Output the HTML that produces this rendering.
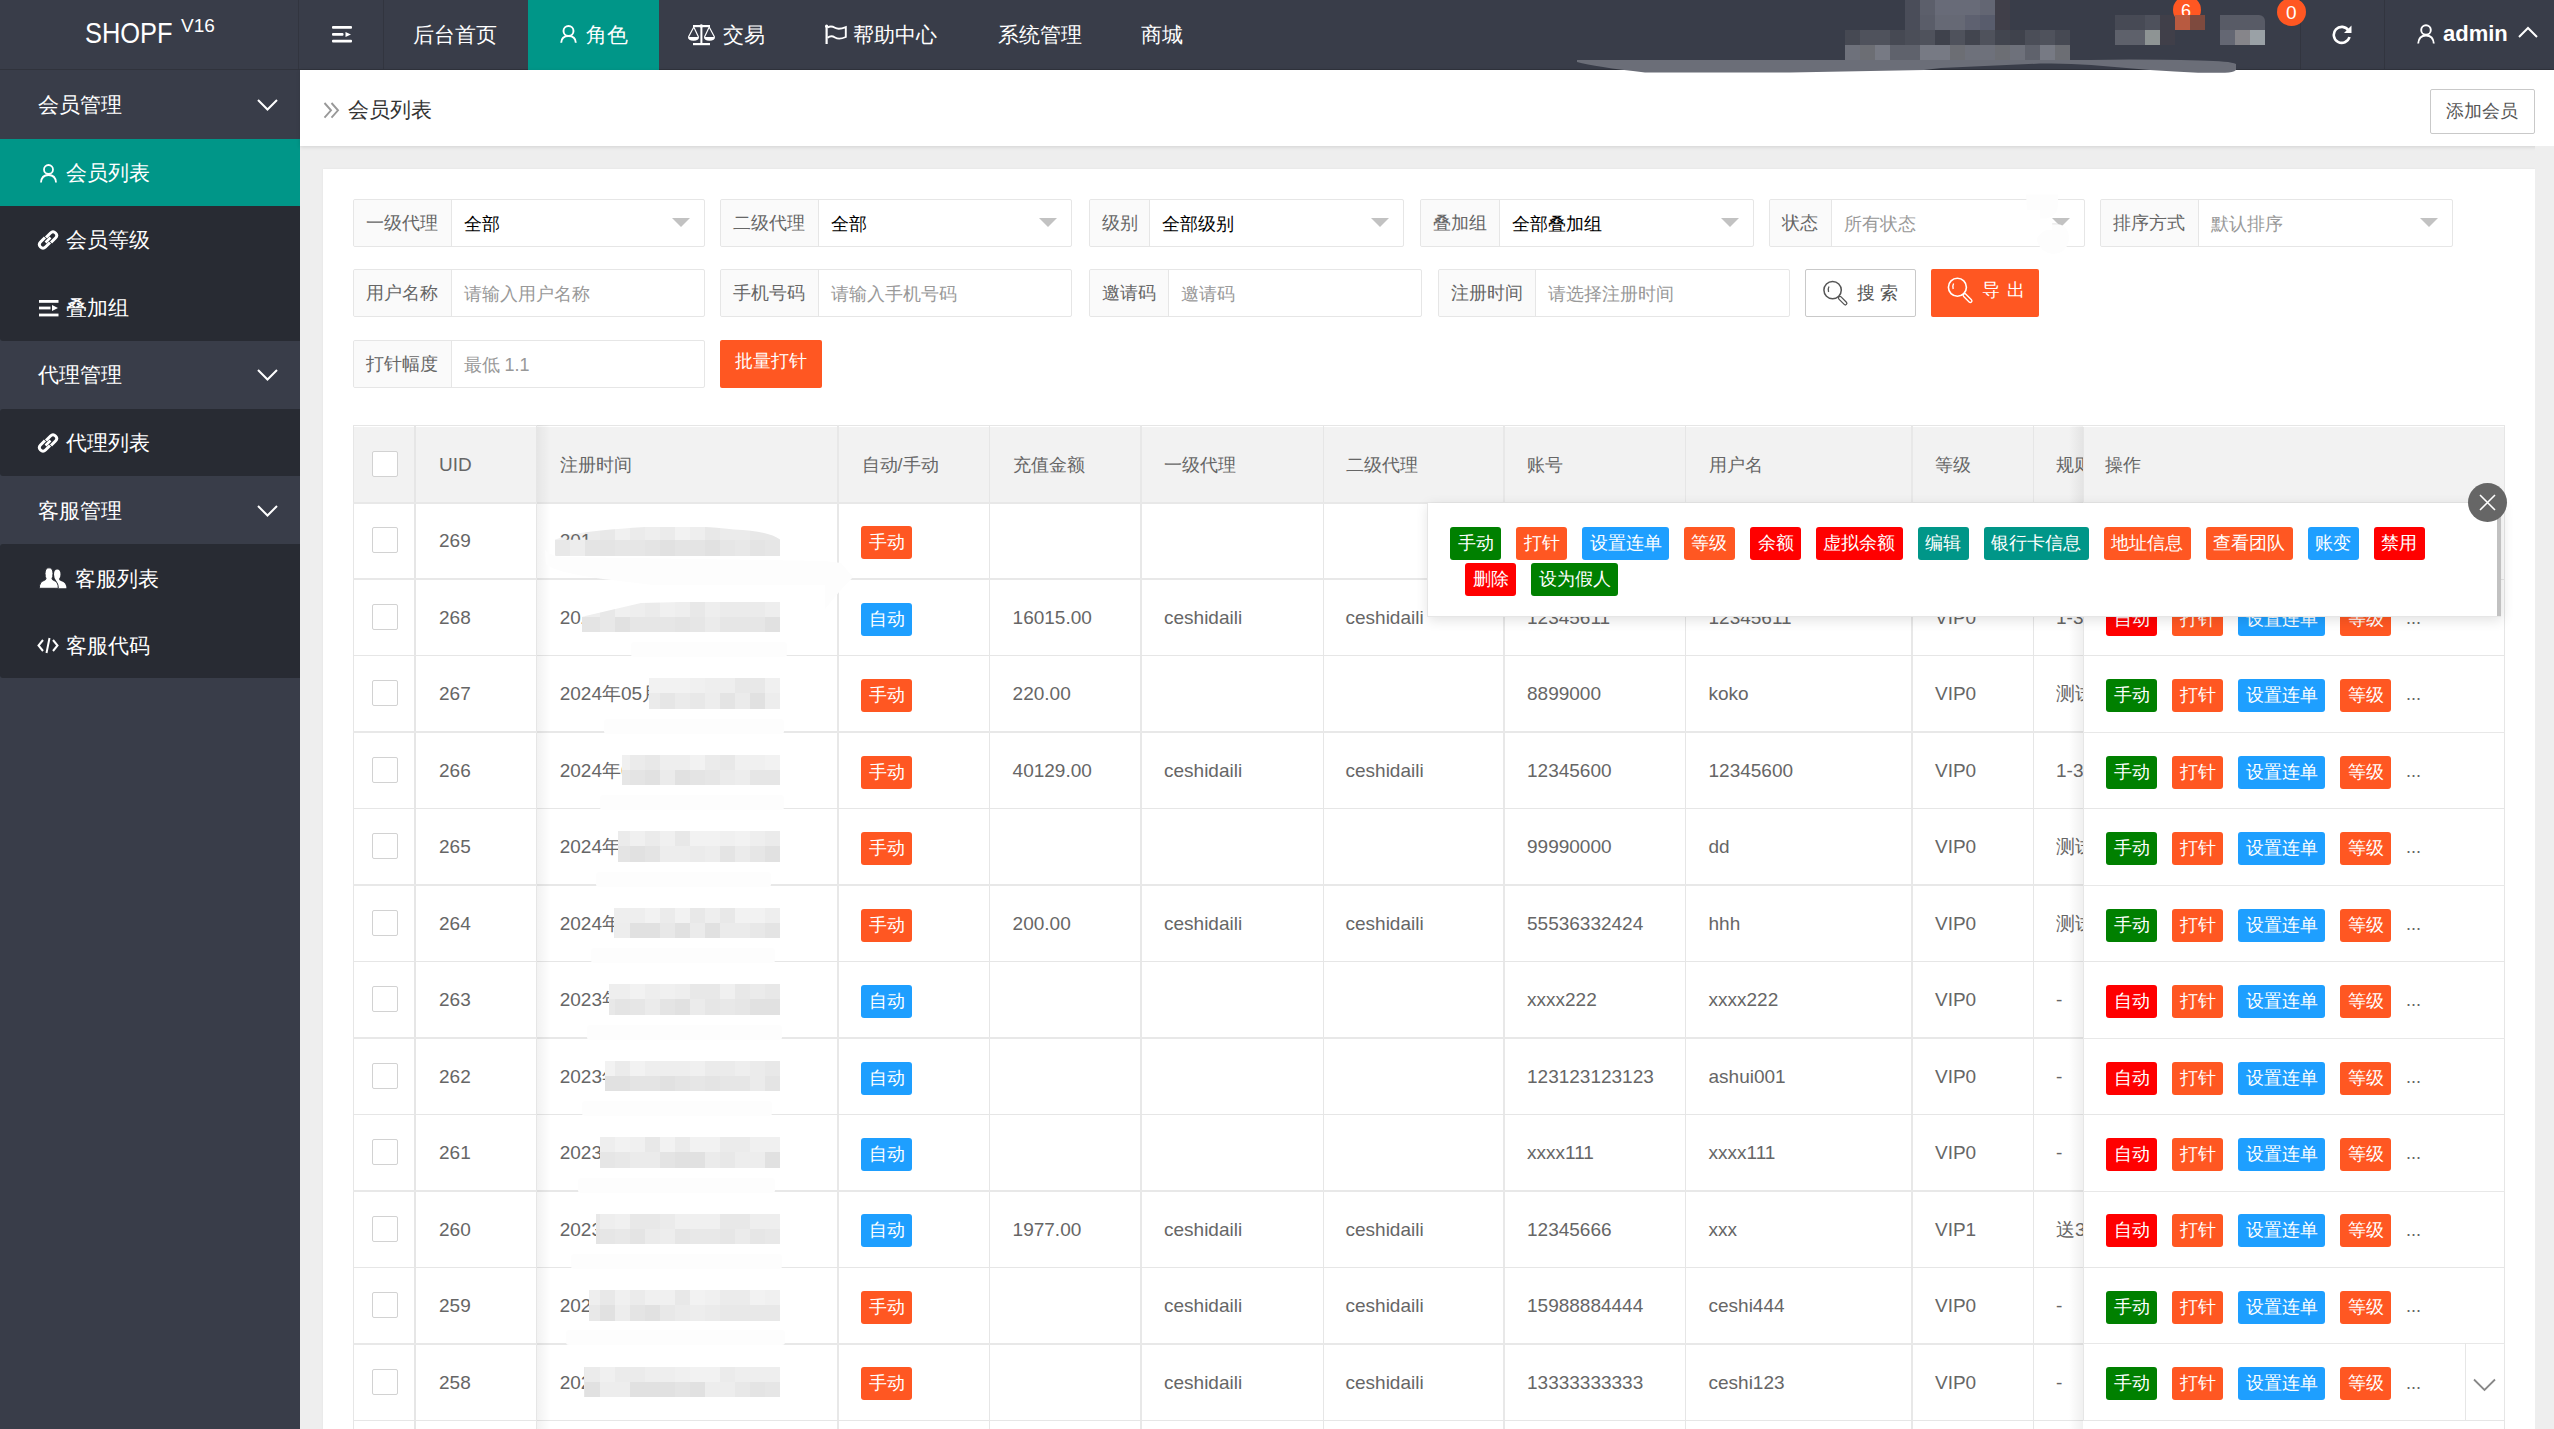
<!DOCTYPE html><html><head><meta charset="utf-8"><title>会员列表</title><style>
*{box-sizing:border-box;margin:0;padding:0}
html,body{width:2554px;height:1429px;overflow:hidden;background:#EEEEEE;font-family:"Liberation Sans",sans-serif;position:relative}
.ab{position:absolute}
.tx{position:absolute;white-space:nowrap;line-height:1}
.hdr{left:0;top:0;width:2554px;height:70px;background:#393D49}
.side{left:0;top:70px;width:300px;height:1359px;background:#393D49}
.w{color:#fff}
.tag{position:absolute;height:33px;line-height:33px;border-radius:3px;color:#fff;font-size:18px;text-align:center;white-space:nowrap}
.g{background:#008000}.o{background:#FF5722}.b{background:#1E9FFF}.r{background:#FF0000}.t{background:#009688}
.cb{position:absolute;width:26px;height:26px;border:1px solid #D2D2D2;border-radius:2px;background:#fff}
.fbox{position:absolute;height:47.5px;border:1px solid #E6E6E6;border-radius:2px;background:#fff}
.flab{position:absolute;left:0;top:0;height:100%;background:#FAFAFA;border-right:1px solid #E6E6E6;border-radius:2px 0 0 2px;color:#666;font-size:18px;line-height:47.5px;padding-left:12px;white-space:nowrap}
.fval{position:absolute;top:0;line-height:48.5px;font-size:18px;white-space:nowrap}
.tri{position:absolute;width:0;height:0;border-left:9px solid transparent;border-right:9px solid transparent;border-top:9px solid #C2C2C2}
.hl{position:absolute;height:1px;background:#E6E6E6}
.vl{position:absolute;width:1px;background:#E6E6E6}
.td{position:absolute;font-size:18px;color:#666;white-space:nowrap;line-height:20px}
.lt{font-size:19px}
</style></head><body>
<div class="ab hdr"></div>
<div class="ab" style="left:298px;top:0;width:1px;height:70px;background:#32353F"></div>
<div class="ab" style="left:383px;top:0;width:1px;height:70px;background:#32353F"></div>
<div class="ab" style="left:2300px;top:0;width:1px;height:70px;background:#32353F"></div>
<div class="ab" style="left:2384px;top:0;width:1px;height:70px;background:#32353F"></div>
<div class="ab" style="left:0;top:69px;width:2554px;height:1px;background:#30333C"></div>
<div class="tx w" style="left:85px;top:18px;font-size:29.5px;transform:scaleX(0.862);transform-origin:0 0">SHOPF</div>
<div class="tx w" style="left:181px;top:16px;font-size:19px">V16</div>
<svg class="ab" style="left:332px;top:26px" width="21" height="17" viewBox="0 0 21 17"><g fill="#fff"><rect x="0" y="0" width="20" height="2.8" rx="1"/><rect x="0" y="7" width="11.5" height="2.8" rx="1"/><path d="M13.5 6 L19 8.4 L13.5 11Z"/><rect x="0" y="13.8" width="20" height="2.8" rx="1"/></g></svg>
<div class="tx w" style="left:413px;top:24px;font-size:21px">后台首页</div>
<div class="ab" style="left:528px;top:0;width:131px;height:70px;background:#009688"></div>
<svg class="ab" style="left:560px;top:25px" width="17" height="18" viewBox="0 0 17 18"><circle cx="8.5" cy="6" r="5" fill="none" stroke="#fff" stroke-width="1.9"/><path d="M1.2 17.8 Q1.5 11 8.5 11 Q15.5 11 15.8 17.8" fill="none" stroke="#fff" stroke-width="1.9"/></svg>
<div class="tx w" style="left:586px;top:24px;font-size:21px">角色</div>
<svg class="ab" style="left:686px;top:22px" width="30" height="24" viewBox="0 0 30 24"><g fill="#fff"><rect x="7" y="3" width="17" height="2.2"/><circle cx="15.3" cy="4" r="1.8"/><rect x="14.4" y="4" width="2" height="18"/><rect x="7" y="21" width="17" height="2.2"/><path d="M2 15 H13 Q13 18.8 7.5 18.8 Q2 18.8 2 15Z"/><path d="M18 15 H29 Q29 18.8 23.5 18.8 Q18 18.8 18 15Z"/></g><g stroke="#fff" stroke-width="1.2" fill="none"><path d="M2.5 15 L7.8 5 L12.5 15"/><path d="M18.5 15 L23.2 5 L28.5 15"/></g></svg>
<div class="tx w" style="left:723px;top:24px;font-size:21px">交易</div>
<svg class="ab" style="left:824px;top:24px" width="24" height="22" viewBox="0 0 24 22"><circle cx="2.6" cy="2.2" r="1.6" fill="#fff"/><path d="M2.6 2 V20" stroke="#fff" stroke-width="2.2"/><path d="M3.6 3.5 Q7 1.5 11 3.8 Q14.5 6 21.8 3.2 V13 Q15 16 11 13.5 Q7 11 3.6 13.8" stroke="#fff" stroke-width="1.9" fill="none"/></svg>
<div class="tx w" style="left:853px;top:24px;font-size:21px">帮助中心</div>
<div class="tx w" style="left:998px;top:24px;font-size:21px">系统管理</div>
<div class="tx w" style="left:1141px;top:24px;font-size:21px">商城</div>
<div class="ab" style="left:1905px;top:0px;width:15px;height:15px;background:#4A4D59"></div>
<div class="ab" style="left:1920px;top:0px;width:15px;height:15px;background:#5C5F6B"></div>
<div class="ab" style="left:1935px;top:0px;width:45px;height:15px;background:#686B78"></div>
<div class="ab" style="left:1980px;top:0px;width:15px;height:15px;background:#636673"></div>
<div class="ab" style="left:1905px;top:15px;width:15px;height:15px;background:#4A4D59"></div>
<div class="ab" style="left:1920px;top:15px;width:15px;height:15px;background:#5A5D69"></div>
<div class="ab" style="left:1935px;top:15px;width:30px;height:15px;background:#666975"></div>
<div class="ab" style="left:1965px;top:15px;width:15px;height:15px;background:#5E6170"></div>
<div class="ab" style="left:1980px;top:15px;width:15px;height:15px;background:#585C6C"></div>
<div class="ab" style="left:1995px;top:0px;width:15px;height:30px;background:#403F49"></div>
<div class="ab" style="left:1845px;top:30px;width:15px;height:15px;background:#464953"></div>
<div class="ab" style="left:1860px;top:30px;width:15px;height:15px;background:#4F525C"></div>
<div class="ab" style="left:1875px;top:30px;width:15px;height:15px;background:#4F525C"></div>
<div class="ab" style="left:1890px;top:30px;width:15px;height:15px;background:#464953"></div>
<div class="ab" style="left:1905px;top:30px;width:15px;height:15px;background:#4B4E58"></div>
<div class="ab" style="left:1920px;top:30px;width:15px;height:15px;background:#4F525C"></div>
<div class="ab" style="left:1935px;top:30px;width:15px;height:15px;background:#3F424C"></div>
<div class="ab" style="left:1950px;top:30px;width:15px;height:15px;background:#4F525C"></div>
<div class="ab" style="left:1965px;top:30px;width:15px;height:15px;background:#42454F"></div>
<div class="ab" style="left:1980px;top:30px;width:15px;height:15px;background:#4F525C"></div>
<div class="ab" style="left:1995px;top:30px;width:15px;height:15px;background:#42454F"></div>
<div class="ab" style="left:2010px;top:30px;width:15px;height:15px;background:#3F424C"></div>
<div class="ab" style="left:2025px;top:30px;width:15px;height:15px;background:#4B4E58"></div>
<div class="ab" style="left:2040px;top:30px;width:15px;height:15px;background:#4F525C"></div>
<div class="ab" style="left:2055px;top:30px;width:15px;height:15px;background:#464953"></div>
<div class="ab" style="left:1845px;top:45px;width:15px;height:15px;background:#6E717B"></div>
<div class="ab" style="left:1860px;top:45px;width:15px;height:15px;background:#6C6E74"></div>
<div class="ab" style="left:1875px;top:45px;width:15px;height:15px;background:#777A84"></div>
<div class="ab" style="left:1890px;top:45px;width:15px;height:15px;background:#5F626C"></div>
<div class="ab" style="left:1905px;top:45px;width:15px;height:15px;background:#5F626C"></div>
<div class="ab" style="left:1920px;top:45px;width:15px;height:15px;background:#777A84"></div>
<div class="ab" style="left:1935px;top:45px;width:15px;height:15px;background:#777A84"></div>
<div class="ab" style="left:1950px;top:45px;width:15px;height:15px;background:#6C6E74"></div>
<div class="ab" style="left:1965px;top:45px;width:15px;height:15px;background:#6E717B"></div>
<div class="ab" style="left:1980px;top:45px;width:15px;height:15px;background:#6E717B"></div>
<div class="ab" style="left:1995px;top:45px;width:15px;height:15px;background:#6C6E74"></div>
<div class="ab" style="left:2010px;top:45px;width:15px;height:15px;background:#6E717B"></div>
<div class="ab" style="left:2025px;top:45px;width:15px;height:15px;background:#5F626C"></div>
<div class="ab" style="left:2040px;top:45px;width:15px;height:15px;background:#777A84"></div>
<div class="ab" style="left:2055px;top:45px;width:15px;height:15px;background:#6C6E74"></div>
<div class="ab" style="left:2115px;top:15px;width:30px;height:15px;background:#474A55"></div>
<div class="ab" style="left:2115px;top:30px;width:30px;height:15px;background:#5E616B"></div>
<div class="ab" style="left:2145px;top:15px;width:15px;height:15px;background:#4E515C"></div>
<div class="ab" style="left:2145px;top:30px;width:15px;height:15px;background:#8E9494"></div>
<div class="ab" style="left:2160px;top:15px;width:15px;height:30px;background:#403F49"></div>
<div class="ab" style="left:2173px;top:-4px;width:28px;height:28px;border-radius:50%;background:#FF5722"></div>
<div class="tx w" style="left:2181px;top:2px;font-size:18px">6</div>
<div class="ab" style="left:2175px;top:15px;width:30px;height:15px;background:#B85A40"></div>
<div class="ab" style="left:2190px;top:15px;width:15px;height:15px;background:#7E4A3E"></div>
<div class="ab" style="left:2220px;top:15px;width:45px;height:30px;background:#585B66;border-radius:0 6px 0 0"></div>
<div class="ab" style="left:2220px;top:30px;width:15px;height:15px;background:#646773"></div>
<div class="ab" style="left:2235px;top:30px;width:15px;height:15px;background:#86858A"></div>
<div class="ab" style="left:2250px;top:30px;width:15px;height:15px;background:#9AA1A6"></div>
<div class="ab" style="left:2277px;top:-2px;width:29px;height:28px;border-radius:50%;background:#FF5722"></div>
<div class="tx w" style="left:2286px;top:3px;font-size:19px">0</div>
<svg class="ab" style="left:2331px;top:24px" width="22" height="21" viewBox="0 0 22 21"><path d="M17.5 6.5 A8 8 0 1 0 18.5 13" fill="none" stroke="#fff" stroke-width="2.6"/><path d="M20.5 1.5 V9 H13Z" fill="#fff"/></svg>
<svg class="ab" style="left:2417px;top:24px" width="18" height="20" viewBox="0 0 18 20"><circle cx="9" cy="6" r="4.8" fill="none" stroke="#fff" stroke-width="1.9"/><path d="M1.2 19.5 Q1.8 11.5 9 11.5 Q16.2 11.5 16.8 19.5" fill="none" stroke="#fff" stroke-width="1.9"/></svg>
<div class="tx w" style="left:2443px;top:23px;font-size:22px;font-weight:bold">admin</div>
<svg class="ab" style="left:2518px;top:26px" width="20" height="12" viewBox="0 0 20 12"><path d="M1 11 L10 2 L19 11" fill="none" stroke="#fff" stroke-width="2"/></svg>
<div class="ab side"></div>
<div class="ab" style="left:0;top:206px;width:300px;height:135px;background:#282B33;border-radius:0 0 0 3px"></div>
<div class="ab" style="left:0;top:139px;width:300px;height:67px;background:#009688"></div>
<div class="ab" style="left:0;top:409px;width:300px;height:67px;background:#282B33;border-radius:3px 0 0 3px"></div>
<div class="ab" style="left:0;top:544px;width:300px;height:134px;background:#282B33;border-radius:3px 0 0 3px"></div>
<div class="tx w" style="left:38px;top:94px;font-size:21px">会员管理</div>
<svg class="ab" style="left:257px;top:99px" width="21" height="12" viewBox="0 0 21 12"><path d="M1 1 L10.5 10.5 L20 1" fill="none" stroke="#fff" stroke-width="2"/></svg>
<svg class="ab" style="left:40px;top:164px" width="17" height="19" viewBox="0 0 17 19"><circle cx="8.5" cy="5.5" r="4.5" fill="none" stroke="#fff" stroke-width="1.8"/><path d="M1 18.5 Q1.5 11 8.5 11 Q15.5 11 16 18.5" fill="none" stroke="#fff" stroke-width="1.8"/></svg>
<div class="tx w" style="left:66px;top:162px;font-size:21px">会员列表</div>
<svg class="ab" style="left:37px;top:229px" width="22" height="22" viewBox="0 0 22 22"><g fill="none" stroke="#fff" stroke-width="3"><path d="M9 8.5 L13.5 4 Q16 1.5 18.5 4 Q21 6.5 18.5 9 L14 13.5"/><path d="M13 13.5 L8.5 18 Q6 20.5 3.5 18 Q1 15.5 3.5 13 L8 8.5"/><path d="M8.5 13.5 L13.5 8.5" stroke-width="2.5"/></g></svg>
<div class="tx w" style="left:66px;top:229px;font-size:21px">会员等级</div>
<svg class="ab" style="left:38.5px;top:300px" width="20" height="17" viewBox="0 0 20 17"><g fill="#fff"><rect x="0" y="0" width="19.5" height="2.8"/><rect x="0" y="6.6" width="11.5" height="2.8"/><path d="M13 5 L19 8 L13 11Z"/><rect x="0" y="13.6" width="19.5" height="2.8"/></g></svg>
<div class="tx w" style="left:66px;top:297px;font-size:21px">叠加组</div>
<div class="tx w" style="left:38px;top:364px;font-size:21px">代理管理</div>
<svg class="ab" style="left:257px;top:369px" width="21" height="12" viewBox="0 0 21 12"><path d="M1 1 L10.5 10.5 L20 1" fill="none" stroke="#fff" stroke-width="2"/></svg>
<svg class="ab" style="left:37px;top:432px" width="22" height="22" viewBox="0 0 22 22"><g fill="none" stroke="#fff" stroke-width="3"><path d="M9 8.5 L13.5 4 Q16 1.5 18.5 4 Q21 6.5 18.5 9 L14 13.5"/><path d="M13 13.5 L8.5 18 Q6 20.5 3.5 18 Q1 15.5 3.5 13 L8 8.5"/><path d="M8.5 13.5 L13.5 8.5" stroke-width="2.5"/></g></svg>
<div class="tx w" style="left:66px;top:432px;font-size:21px">代理列表</div>
<div class="tx w" style="left:38px;top:500px;font-size:21px">客服管理</div>
<svg class="ab" style="left:257px;top:505px" width="21" height="12" viewBox="0 0 21 12"><path d="M1 1 L10.5 10.5 L20 1" fill="none" stroke="#fff" stroke-width="2"/></svg>
<svg class="ab" style="left:38px;top:566px" width="30" height="24" viewBox="0 0 30 24"><path d="M17 22.3 Q20.5 17 18 14.5 Q16 11.5 16 8.5 Q16 3.5 19.2 3.5 Q22.5 3.5 22.5 8.5 Q22.5 11.5 21 13 Q21.2 14.5 23 15 Q28.4 16.5 28.4 22.3Z" fill="#fff"/><path d="M1.2 22.3 Q1.5 15.5 6.5 14.3 Q7.8 14 8 12.5 Q7 11 7 7.5 Q7 1.8 11 1.8 Q15 1.8 15 7.5 Q15 11 14 12.5 Q14.2 14 15.5 14.3 Q20.3 15.5 20.3 22.3Z" fill="#fff" stroke="#282B33" stroke-width="1"/></svg>
<div class="tx w" style="left:75px;top:568px;font-size:21px">客服列表</div>
<svg class="ab" style="left:37px;top:637px" width="22" height="17" viewBox="0 0 22 17"><path d="M6 3 L1.5 8.5 L6 14 M16 3 L20.5 8.5 L16 14 M12.5 1 L9.5 16" fill="none" stroke="#fff" stroke-width="2"/></svg>
<div class="tx w" style="left:66px;top:635px;font-size:21px">客服代码</div>
<div class="ab" style="left:300px;top:70px;width:2254px;height:76px;background:#fff;box-shadow:0 1px 4px rgba(0,0,0,.12)"></div>
<svg class="ab" style="left:323px;top:102px" width="17" height="17" viewBox="0 0 17 17"><path d="M1.5 1 L8 8.3 L1.5 15.6 M8.5 1 L15 8.3 L8.5 15.6" fill="none" stroke="#999" stroke-width="1.9"/></svg>
<div class="tx" style="left:348px;top:99px;font-size:21px;color:#333">会员列表</div>
<div class="ab" style="left:2430px;top:89px;width:105px;height:45px;border:1px solid #C9C9C9;border-radius:2px;background:#fff"></div>
<div class="tx" style="left:2446px;top:102px;font-size:18px;color:#555">添加会员</div>
<svg class="ab" style="left:1575px;top:58px" width="665" height="17" viewBox="0 0 665 17"><path d="M2 2 L515 2 Q560 1 625 2.5 Q655 3 661 6 L661 12 Q658 14.7 650 14.7 L623 14.7 Q600 13.5 575 12 L516 7 Q490 5 465 5.6 L366 10 L349 12 L215 14.4 L70 14.4 Q20 9 2 4Z" fill="#6B6E78"/></svg>
<div class="ab" style="left:323px;top:169px;width:2212px;height:1300px;background:#fff;box-shadow:0 0 2px rgba(0,0,0,.06)"></div>
<div class="fbox" style="left:353px;top:199px;width:352.0px"><div class="flab" style="width:97.5px">一级代理</div><div class="fval" style="left:109.5px;color:#000">全部</div><div class="tri" style="left:318.0px;top:18px"></div></div>
<div class="fbox" style="left:720.4px;top:199px;width:352.1px"><div class="flab" style="width:97.6px">二级代理</div><div class="fval" style="left:109.6px;color:#000">全部</div><div class="tri" style="left:318.1px;top:18px"></div></div>
<div class="fbox" style="left:1088.5px;top:199px;width:315.3px"><div class="flab" style="width:60.8px">级别</div><div class="fval" style="left:72.8px;color:#000">全部级别</div><div class="tri" style="left:281.3px;top:18px"></div></div>
<div class="fbox" style="left:1419.7px;top:199px;width:334.3px"><div class="flab" style="width:79.8px">叠加组</div><div class="fval" style="left:91.8px;color:#000">全部叠加组</div><div class="tri" style="left:300.3px;top:18px"></div></div>
<div class="fbox" style="left:1769.3px;top:199px;width:315.8px"><div class="flab" style="width:61.3px">状态</div><div class="fval" style="left:73.3px;color:#999">所有状态</div><div class="tri" style="left:281.8px;top:18px"></div></div>
<div class="fbox" style="left:2100.4px;top:199px;width:352.5px"><div class="flab" style="width:98px">排序方式</div><div class="fval" style="left:110px;color:#999">默认排序</div><div class="tri" style="left:318.5px;top:18px"></div></div>
<div class="fbox" style="left:353px;top:269.3px;width:352.0px"><div class="flab" style="width:97.5px">用户名称</div><div class="fval" style="left:109.5px;color:#999">请输入用户名称</div></div>
<div class="fbox" style="left:720.4px;top:269.3px;width:352.1px"><div class="flab" style="width:97.6px">手机号码</div><div class="fval" style="left:109.6px;color:#999">请输入手机号码</div></div>
<div class="fbox" style="left:1088.5px;top:269.3px;width:333.5px"><div class="flab" style="width:79px">邀请码</div><div class="fval" style="left:91px;color:#999">邀请码</div></div>
<div class="fbox" style="left:1437.5px;top:269.3px;width:352.3px"><div class="flab" style="width:97.8px">注册时间</div><div class="fval" style="left:109.8px;color:#999">请选择注册时间</div></div>
<svg class="ab" style="left:2025px;top:194px" width="46" height="61" viewBox="0 0 46 61"><path d="M1 0.5 H33 V12 Q32 22 22 24.5 L15 24.5 V16 H2Z" fill="#FDFDFD"/><path d="M27 30.5 H35 Q44 33 44 44 Q43 59 28 60 Q16 59 12 47 L12 44 Q17 37 22 36 L27 36Z" fill="#FDFDFD"/><path d="M27.2 29.3 H31 L33.5 30.5 H27.2Z" fill="#E8E8E8"/></svg>
<div class="ab" style="left:1805px;top:269px;width:110.5px;height:47.5px;border:1px solid #C9C9C9;border-radius:2px;background:#fff"></div>
<svg class="ab" style="left:1820px;top:278px" width="30" height="30" viewBox="0 0 30 30"><circle cx="12.6" cy="12.1" r="8.7" fill="none" stroke="#555" stroke-width="1.5"/><path d="M20 20 L25.3 25.3" stroke="#555" stroke-width="4.4" stroke-linecap="round"/><path d="M20 20 L25.3 25.3" stroke="#fff" stroke-width="1.8" stroke-linecap="round"/><path d="M9 8.5 Q7.6 11 8.6 14" fill="none" stroke="#555" stroke-width="1.3"/></svg>
<div class="tx" style="left:1857px;top:284px;font-size:18px;color:#555;letter-spacing:5px">搜索</div>
<div class="ab" style="left:1931px;top:269px;width:108px;height:47.5px;border-radius:2px;background:#FF5722"></div>
<svg class="ab" style="left:1945px;top:275px" width="30" height="30" viewBox="0 0 30 30"><circle cx="12.4" cy="12.3" r="9" fill="none" stroke="#fff" stroke-width="1.6"/><path d="M19.8 20.3 L25.3 25.8" stroke="#fff" stroke-width="4.6" stroke-linecap="round"/><path d="M19.8 20.3 L25.3 25.8" stroke="#FF5722" stroke-width="1.9" stroke-linecap="round"/><path d="M8.6 8.5 Q7.2 11 8.2 14" fill="none" stroke="#fff" stroke-width="1.4"/></svg>
<div class="tx w" style="left:1982px;top:281px;font-size:18px;letter-spacing:7px">导出</div>
<div class="fbox" style="left:353px;top:340px;width:352.0px"><div class="flab" style="width:97.5px">打针幅度</div><div class="fval" style="left:109.5px;color:#999">最低 1.1</div></div>
<div class="ab" style="left:720.4px;top:340px;width:101.6px;height:47.5px;border-radius:2px;background:#FF5722"></div>
<div class="tx w" style="left:735px;top:352px;font-size:18px">批量打针</div>
<div class="ab" style="left:353px;top:425px;width:2151.5px;height:1100px;border:1px solid #E6E6E6;background:#fff"></div>
<div class="ab" style="left:354px;top:427px;width:2149.5px;height:75.19999999999999px;background:#F2F2F2"></div>
<div class="vl" style="left:414px;top:425px;height:1010px"></div>
<div class="vl" style="left:415.3px;top:425px;height:1010px"></div>
<div class="vl" style="left:536.3px;top:425px;height:1010px"></div>
<div class="vl" style="left:837px;top:425px;height:1010px;width:2px;background:#E8E8E8"></div>
<div class="vl" style="left:989.3px;top:425px;height:1010px"></div>
<div class="vl" style="left:1140px;top:425px;height:1010px;width:2px;background:#E8E8E8"></div>
<div class="vl" style="left:1322.6px;top:425px;height:1010px"></div>
<div class="vl" style="left:1503px;top:425px;height:1010px;width:2px;background:#E8E8E8"></div>
<div class="vl" style="left:1685.3px;top:425px;height:1010px"></div>
<div class="vl" style="left:1911px;top:425px;height:1010px;width:2px;background:#E8E8E8"></div>
<div class="vl" style="left:2033px;top:425px;height:1010px"></div>
<div class="hl" style="left:353px;top:502px;width:2151.5px;height:2px;background:#E8E8E8"></div>
<div class="hl" style="left:353px;top:578px;width:2151.5px;height:2px;background:#E8E8E8"></div>
<div class="hl" style="left:353px;top:655.16px;width:2151.5px"></div>
<div class="hl" style="left:353px;top:731px;width:2151.5px;height:2px;background:#E8E8E8"></div>
<div class="hl" style="left:353px;top:808.12px;width:2151.5px"></div>
<div class="hl" style="left:353px;top:884px;width:2151.5px;height:2px;background:#E8E8E8"></div>
<div class="hl" style="left:353px;top:961.08px;width:2151.5px"></div>
<div class="hl" style="left:353px;top:1037px;width:2151.5px;height:2px;background:#E8E8E8"></div>
<div class="hl" style="left:353px;top:1114.04px;width:2151.5px"></div>
<div class="hl" style="left:353px;top:1190px;width:2151.5px;height:2px;background:#E8E8E8"></div>
<div class="hl" style="left:353px;top:1267.00px;width:2151.5px"></div>
<div class="hl" style="left:353px;top:1343px;width:2151.5px;height:2px;background:#E8E8E8"></div>
<div class="hl" style="left:353px;top:1419.96px;width:2151.5px"></div>
<div class="ab" style="left:537px;top:425px;width:14px;height:1010px;background:linear-gradient(to right,rgba(0,0,0,.05),rgba(0,0,0,0))"></div>
<div class="td lt" style="left:439px;top:455px">UID</div>
<div class="td" style="left:559.7px;top:455px">注册时间</div>
<div class="td" style="left:861.5px;top:455px">自动/手动</div>
<div class="td" style="left:1012.6px;top:455px">充值金额</div>
<div class="td" style="left:1164px;top:455px">一级代理</div>
<div class="td" style="left:1345.5px;top:455px">二级代理</div>
<div class="td" style="left:1527px;top:455px">账号</div>
<div class="td" style="left:1708.5px;top:455px">用户名</div>
<div class="td" style="left:1935px;top:455px">等级</div>
<div class="td" style="left:2056px;top:455px">规则</div>
<div class="cb" style="left:371.5px;top:451px"></div>
<div class="cb" style="left:371.5px;top:527.44px"></div>
<div class="td lt" style="left:439px;top:531.24px">269</div>
<div class="td lt" style="left:559.7px;top:531.24px">20</div>
<div class="tag o" style="left:861px;top:526.14px;width:51px">手动</div>
<div class="ab" style="left:555.0px;top:525.44px;width:15.3px;height:15.3px;background:#F0F0F0"></div>
<div class="ab" style="left:555.0px;top:540.44px;width:15.3px;height:15.3px;background:#E8E8E8"></div>
<div class="ab" style="left:570.0px;top:525.44px;width:15.3px;height:15.3px;background:#F2F2F2"></div>
<div class="ab" style="left:570.0px;top:540.44px;width:15.3px;height:15.3px;background:#EDEDED"></div>
<div class="ab" style="left:585.0px;top:525.44px;width:15.3px;height:15.3px;background:#EBEBEB"></div>
<div class="ab" style="left:585.0px;top:540.44px;width:15.3px;height:15.3px;background:#E4E4E4"></div>
<div class="ab" style="left:600.0px;top:525.44px;width:15.3px;height:15.3px;background:#E8E8E8"></div>
<div class="ab" style="left:600.0px;top:540.44px;width:15.3px;height:15.3px;background:#E4E4E4"></div>
<div class="ab" style="left:615.0px;top:525.44px;width:15.3px;height:15.3px;background:#F0F0F0"></div>
<div class="ab" style="left:615.0px;top:540.44px;width:15.3px;height:15.3px;background:#E6E6E6"></div>
<div class="ab" style="left:630.0px;top:525.44px;width:15.3px;height:15.3px;background:#EBEBEB"></div>
<div class="ab" style="left:630.0px;top:540.44px;width:15.3px;height:15.3px;background:#E6E6E6"></div>
<div class="ab" style="left:645.0px;top:525.44px;width:15.3px;height:15.3px;background:#EEEEEE"></div>
<div class="ab" style="left:645.0px;top:540.44px;width:15.3px;height:15.3px;background:#E4E4E4"></div>
<div class="ab" style="left:660.0px;top:525.44px;width:15.3px;height:15.3px;background:#EBEBEB"></div>
<div class="ab" style="left:660.0px;top:540.44px;width:15.3px;height:15.3px;background:#E1E1E1"></div>
<div class="ab" style="left:675.0px;top:525.44px;width:15.3px;height:15.3px;background:#F2F2F2"></div>
<div class="ab" style="left:675.0px;top:540.44px;width:15.3px;height:15.3px;background:#E4E4E4"></div>
<div class="ab" style="left:690.0px;top:525.44px;width:15.3px;height:15.3px;background:#EEEEEE"></div>
<div class="ab" style="left:690.0px;top:540.44px;width:15.3px;height:15.3px;background:#E4E4E4"></div>
<div class="ab" style="left:705.0px;top:525.44px;width:15.3px;height:15.3px;background:#E8E8E8"></div>
<div class="ab" style="left:705.0px;top:540.44px;width:15.3px;height:15.3px;background:#E1E1E1"></div>
<div class="ab" style="left:720.0px;top:525.44px;width:15.3px;height:15.3px;background:#EBEBEB"></div>
<div class="ab" style="left:720.0px;top:540.44px;width:15.3px;height:15.3px;background:#E6E6E6"></div>
<div class="ab" style="left:735.0px;top:525.44px;width:15.3px;height:15.3px;background:#EBEBEB"></div>
<div class="ab" style="left:735.0px;top:540.44px;width:15.3px;height:15.3px;background:#E8E8E8"></div>
<div class="ab" style="left:750.0px;top:525.44px;width:15.3px;height:15.3px;background:#E8E8E8"></div>
<div class="ab" style="left:750.0px;top:540.44px;width:15.3px;height:15.3px;background:#E4E4E4"></div>
<div class="ab" style="left:765.0px;top:525.44px;width:15.3px;height:15.3px;background:#E8E8E8"></div>
<div class="ab" style="left:765.0px;top:540.44px;width:15.3px;height:15.3px;background:#E6E6E6"></div>
<svg class="ab" style="left:554px;top:524.44px" width="232" height="17" viewBox="0 0 232 17"><path d="M0 0 H232 V17 L226 15.6 Q215 7 180 5.6 Q160 3 151 2.9 L91 2.9 Q40 6 16 10.6 L0 16 Z" fill="#fff"/></svg>
<div class="td lt" style="left:559.7px;top:531.24px;clip-path:inset(0 0 58% 0)">201</div>
<div class="cb" style="left:371.5px;top:603.92px"></div>
<div class="td lt" style="left:439px;top:607.72px">268</div>
<div class="td lt" style="left:559.7px;top:607.72px">202</div>
<div class="tag b" style="left:861px;top:602.62px;width:51px">自动</div>
<div class="td lt" style="left:1012.6px;top:607.72px">16015.00</div>
<div class="td lt" style="left:1164px;top:607.72px">ceshidaili</div>
<div class="td lt" style="left:1345.5px;top:607.72px">ceshidaili</div>
<div class="td lt" style="left:1527px;top:607.72px">12345611</div>
<div class="td lt" style="left:1708.5px;top:607.72px">12345611</div>
<div class="td lt" style="left:1935px;top:607.72px">VIP0</div>
<div class="td lt" style="left:2056px;top:607.72px">1-3</div>
<div class="ab" style="left:582.0px;top:601.92px;width:3.3px;height:15.3px;background:#F2F2F2"></div>
<div class="ab" style="left:582.0px;top:616.92px;width:3.3px;height:15.3px;background:#E4E4E4"></div>
<div class="ab" style="left:585.0px;top:601.92px;width:15.3px;height:15.3px;background:#EEEEEE"></div>
<div class="ab" style="left:585.0px;top:616.92px;width:15.3px;height:15.3px;background:#E4E4E4"></div>
<div class="ab" style="left:600.0px;top:601.92px;width:15.3px;height:15.3px;background:#E8E8E8"></div>
<div class="ab" style="left:600.0px;top:616.92px;width:15.3px;height:15.3px;background:#E8E8E8"></div>
<div class="ab" style="left:615.0px;top:601.92px;width:15.3px;height:15.3px;background:#F0F0F0"></div>
<div class="ab" style="left:615.0px;top:616.92px;width:15.3px;height:15.3px;background:#E1E1E1"></div>
<div class="ab" style="left:630.0px;top:601.92px;width:15.3px;height:15.3px;background:#EEEEEE"></div>
<div class="ab" style="left:630.0px;top:616.92px;width:15.3px;height:15.3px;background:#E6E6E6"></div>
<div class="ab" style="left:645.0px;top:601.92px;width:15.3px;height:15.3px;background:#EBEBEB"></div>
<div class="ab" style="left:645.0px;top:616.92px;width:15.3px;height:15.3px;background:#E6E6E6"></div>
<div class="ab" style="left:660.0px;top:601.92px;width:15.3px;height:15.3px;background:#F0F0F0"></div>
<div class="ab" style="left:660.0px;top:616.92px;width:15.3px;height:15.3px;background:#E6E6E6"></div>
<div class="ab" style="left:675.0px;top:601.92px;width:15.3px;height:15.3px;background:#EEEEEE"></div>
<div class="ab" style="left:675.0px;top:616.92px;width:15.3px;height:15.3px;background:#E4E4E4"></div>
<div class="ab" style="left:690.0px;top:601.92px;width:15.3px;height:15.3px;background:#E8E8E8"></div>
<div class="ab" style="left:690.0px;top:616.92px;width:15.3px;height:15.3px;background:#E6E6E6"></div>
<div class="ab" style="left:705.0px;top:601.92px;width:15.3px;height:15.3px;background:#EEEEEE"></div>
<div class="ab" style="left:705.0px;top:616.92px;width:15.3px;height:15.3px;background:#EBEBEB"></div>
<div class="ab" style="left:720.0px;top:601.92px;width:15.3px;height:15.3px;background:#EBEBEB"></div>
<div class="ab" style="left:720.0px;top:616.92px;width:15.3px;height:15.3px;background:#E6E6E6"></div>
<div class="ab" style="left:735.0px;top:601.92px;width:15.3px;height:15.3px;background:#EBEBEB"></div>
<div class="ab" style="left:735.0px;top:616.92px;width:15.3px;height:15.3px;background:#E6E6E6"></div>
<div class="ab" style="left:750.0px;top:601.92px;width:15.3px;height:15.3px;background:#EBEBEB"></div>
<div class="ab" style="left:750.0px;top:616.92px;width:15.3px;height:15.3px;background:#E6E6E6"></div>
<div class="ab" style="left:765.0px;top:601.92px;width:15.3px;height:15.3px;background:#EEEEEE"></div>
<div class="ab" style="left:765.0px;top:616.92px;width:15.3px;height:15.3px;background:#E1E1E1"></div>
<svg class="ab" style="left:581px;top:600.92px" width="100" height="17" viewBox="0 0 100 17"><path d="M0 0 H100 V1 L60 2 L0 16Z" fill="#fff"/></svg>
<div class="ab" style="left:631.0px;top:642.16px;width:156.0px;height:15px;background:#FDFDFD;border-radius:3px"></div>
<div class="cb" style="left:371.5px;top:680.40px"></div>
<div class="td lt" style="left:439px;top:684.20px">267</div>
<div class="td lt" style="left:559.7px;top:684.20px">2024年05月</div>
<div class="tag o" style="left:861px;top:679.10px;width:51px">手动</div>
<div class="td lt" style="left:1012.6px;top:684.20px">220.00</div>
<div class="td lt" style="left:1527px;top:684.20px">8899000</div>
<div class="td lt" style="left:1708.5px;top:684.20px">koko</div>
<div class="td lt" style="left:1935px;top:684.20px">VIP0</div>
<div class="td lt" style="left:2056px;top:684.20px">测试</div>
<div class="ab" style="left:649.0px;top:678.40px;width:11.3px;height:15.3px;background:#F2F2F2"></div>
<div class="ab" style="left:649.0px;top:693.40px;width:11.3px;height:15.3px;background:#EBEBEB"></div>
<div class="ab" style="left:660.0px;top:678.40px;width:15.3px;height:15.3px;background:#F2F2F2"></div>
<div class="ab" style="left:660.0px;top:693.40px;width:15.3px;height:15.3px;background:#E6E6E6"></div>
<div class="ab" style="left:675.0px;top:678.40px;width:15.3px;height:15.3px;background:#F2F2F2"></div>
<div class="ab" style="left:675.0px;top:693.40px;width:15.3px;height:15.3px;background:#EBEBEB"></div>
<div class="ab" style="left:690.0px;top:678.40px;width:15.3px;height:15.3px;background:#F0F0F0"></div>
<div class="ab" style="left:690.0px;top:693.40px;width:15.3px;height:15.3px;background:#E8E8E8"></div>
<div class="ab" style="left:705.0px;top:678.40px;width:15.3px;height:15.3px;background:#EEEEEE"></div>
<div class="ab" style="left:705.0px;top:693.40px;width:15.3px;height:15.3px;background:#EDEDED"></div>
<div class="ab" style="left:720.0px;top:678.40px;width:15.3px;height:15.3px;background:#EEEEEE"></div>
<div class="ab" style="left:720.0px;top:693.40px;width:15.3px;height:15.3px;background:#E4E4E4"></div>
<div class="ab" style="left:735.0px;top:678.40px;width:15.3px;height:15.3px;background:#E8E8E8"></div>
<div class="ab" style="left:735.0px;top:693.40px;width:15.3px;height:15.3px;background:#EBEBEB"></div>
<div class="ab" style="left:750.0px;top:678.40px;width:15.3px;height:15.3px;background:#E8E8E8"></div>
<div class="ab" style="left:750.0px;top:693.40px;width:15.3px;height:15.3px;background:#E1E1E1"></div>
<div class="ab" style="left:765.0px;top:678.40px;width:15.3px;height:15.3px;background:#F0F0F0"></div>
<div class="ab" style="left:765.0px;top:693.40px;width:15.3px;height:15.3px;background:#EDEDED"></div>
<div class="ab" style="left:603.7px;top:718.64px;width:180.3px;height:15px;background:#FDFDFD;border-radius:3px"></div>
<div class="cb" style="left:371.5px;top:756.88px"></div>
<div class="td lt" style="left:439px;top:760.68px">266</div>
<div class="td lt" style="left:559.7px;top:760.68px">2024年0</div>
<div class="tag o" style="left:861px;top:755.58px;width:51px">手动</div>
<div class="td lt" style="left:1012.6px;top:760.68px">40129.00</div>
<div class="td lt" style="left:1164px;top:760.68px">ceshidaili</div>
<div class="td lt" style="left:1345.5px;top:760.68px">ceshidaili</div>
<div class="td lt" style="left:1527px;top:760.68px">12345600</div>
<div class="td lt" style="left:1708.5px;top:760.68px">12345600</div>
<div class="td lt" style="left:1935px;top:760.68px">VIP0</div>
<div class="td lt" style="left:2056px;top:760.68px">1-3</div>
<div class="ab" style="left:621.7px;top:754.88px;width:8.6px;height:15.3px;background:#F0F0F0"></div>
<div class="ab" style="left:621.7px;top:769.88px;width:8.6px;height:15.3px;background:#E6E6E6"></div>
<div class="ab" style="left:630.0px;top:754.88px;width:15.3px;height:15.3px;background:#EBEBEB"></div>
<div class="ab" style="left:630.0px;top:769.88px;width:15.3px;height:15.3px;background:#E4E4E4"></div>
<div class="ab" style="left:645.0px;top:754.88px;width:15.3px;height:15.3px;background:#E8E8E8"></div>
<div class="ab" style="left:645.0px;top:769.88px;width:15.3px;height:15.3px;background:#E1E1E1"></div>
<div class="ab" style="left:660.0px;top:754.88px;width:15.3px;height:15.3px;background:#EEEEEE"></div>
<div class="ab" style="left:660.0px;top:769.88px;width:15.3px;height:15.3px;background:#EBEBEB"></div>
<div class="ab" style="left:675.0px;top:754.88px;width:15.3px;height:15.3px;background:#EEEEEE"></div>
<div class="ab" style="left:675.0px;top:769.88px;width:15.3px;height:15.3px;background:#E1E1E1"></div>
<div class="ab" style="left:690.0px;top:754.88px;width:15.3px;height:15.3px;background:#F2F2F2"></div>
<div class="ab" style="left:690.0px;top:769.88px;width:15.3px;height:15.3px;background:#E4E4E4"></div>
<div class="ab" style="left:705.0px;top:754.88px;width:15.3px;height:15.3px;background:#EBEBEB"></div>
<div class="ab" style="left:705.0px;top:769.88px;width:15.3px;height:15.3px;background:#E6E6E6"></div>
<div class="ab" style="left:720.0px;top:754.88px;width:15.3px;height:15.3px;background:#E8E8E8"></div>
<div class="ab" style="left:720.0px;top:769.88px;width:15.3px;height:15.3px;background:#EBEBEB"></div>
<div class="ab" style="left:735.0px;top:754.88px;width:15.3px;height:15.3px;background:#F0F0F0"></div>
<div class="ab" style="left:735.0px;top:769.88px;width:15.3px;height:15.3px;background:#EDEDED"></div>
<div class="ab" style="left:750.0px;top:754.88px;width:15.3px;height:15.3px;background:#F0F0F0"></div>
<div class="ab" style="left:750.0px;top:769.88px;width:15.3px;height:15.3px;background:#E6E6E6"></div>
<div class="ab" style="left:765.0px;top:754.88px;width:15.3px;height:15.3px;background:#F2F2F2"></div>
<div class="ab" style="left:765.0px;top:769.88px;width:15.3px;height:15.3px;background:#E6E6E6"></div>
<div class="ab" style="left:599.5px;top:795.12px;width:184.5px;height:15px;background:#FDFDFD;border-radius:3px"></div>
<div class="cb" style="left:371.5px;top:833.36px"></div>
<div class="td lt" style="left:439px;top:837.16px">265</div>
<div class="td lt" style="left:559.7px;top:837.16px">2024年</div>
<div class="tag o" style="left:861px;top:832.06px;width:51px">手动</div>
<div class="td lt" style="left:1527px;top:837.16px">99990000</div>
<div class="td lt" style="left:1708.5px;top:837.16px">dd</div>
<div class="td lt" style="left:1935px;top:837.16px">VIP0</div>
<div class="td lt" style="left:2056px;top:837.16px">测试</div>
<div class="ab" style="left:617.5px;top:831.36px;width:12.8px;height:15.3px;background:#EBEBEB"></div>
<div class="ab" style="left:617.5px;top:846.36px;width:12.8px;height:15.3px;background:#E4E4E4"></div>
<div class="ab" style="left:630.0px;top:831.36px;width:15.3px;height:15.3px;background:#F0F0F0"></div>
<div class="ab" style="left:630.0px;top:846.36px;width:15.3px;height:15.3px;background:#E1E1E1"></div>
<div class="ab" style="left:645.0px;top:831.36px;width:15.3px;height:15.3px;background:#EBEBEB"></div>
<div class="ab" style="left:645.0px;top:846.36px;width:15.3px;height:15.3px;background:#E4E4E4"></div>
<div class="ab" style="left:660.0px;top:831.36px;width:15.3px;height:15.3px;background:#F0F0F0"></div>
<div class="ab" style="left:660.0px;top:846.36px;width:15.3px;height:15.3px;background:#EDEDED"></div>
<div class="ab" style="left:675.0px;top:831.36px;width:15.3px;height:15.3px;background:#E8E8E8"></div>
<div class="ab" style="left:675.0px;top:846.36px;width:15.3px;height:15.3px;background:#EDEDED"></div>
<div class="ab" style="left:690.0px;top:831.36px;width:15.3px;height:15.3px;background:#F2F2F2"></div>
<div class="ab" style="left:690.0px;top:846.36px;width:15.3px;height:15.3px;background:#EBEBEB"></div>
<div class="ab" style="left:705.0px;top:831.36px;width:15.3px;height:15.3px;background:#F2F2F2"></div>
<div class="ab" style="left:705.0px;top:846.36px;width:15.3px;height:15.3px;background:#EDEDED"></div>
<div class="ab" style="left:720.0px;top:831.36px;width:15.3px;height:15.3px;background:#F0F0F0"></div>
<div class="ab" style="left:720.0px;top:846.36px;width:15.3px;height:15.3px;background:#E4E4E4"></div>
<div class="ab" style="left:735.0px;top:831.36px;width:15.3px;height:15.3px;background:#F2F2F2"></div>
<div class="ab" style="left:735.0px;top:846.36px;width:15.3px;height:15.3px;background:#EBEBEB"></div>
<div class="ab" style="left:750.0px;top:831.36px;width:15.3px;height:15.3px;background:#EEEEEE"></div>
<div class="ab" style="left:750.0px;top:846.36px;width:15.3px;height:15.3px;background:#E6E6E6"></div>
<div class="ab" style="left:765.0px;top:831.36px;width:15.3px;height:15.3px;background:#EBEBEB"></div>
<div class="ab" style="left:765.0px;top:846.36px;width:15.3px;height:15.3px;background:#E1E1E1"></div>
<div class="ab" style="left:596.0px;top:871.60px;width:175.0px;height:15px;background:#FDFDFD;border-radius:3px"></div>
<div class="cb" style="left:371.5px;top:909.84px"></div>
<div class="td lt" style="left:439px;top:913.64px">264</div>
<div class="td lt" style="left:559.7px;top:913.64px">2024年</div>
<div class="tag o" style="left:861px;top:908.54px;width:51px">手动</div>
<div class="td lt" style="left:1012.6px;top:913.64px">200.00</div>
<div class="td lt" style="left:1164px;top:913.64px">ceshidaili</div>
<div class="td lt" style="left:1345.5px;top:913.64px">ceshidaili</div>
<div class="td lt" style="left:1527px;top:913.64px">55536332424</div>
<div class="td lt" style="left:1708.5px;top:913.64px">hhh</div>
<div class="td lt" style="left:1935px;top:913.64px">VIP0</div>
<div class="td lt" style="left:2056px;top:913.64px">测试</div>
<div class="ab" style="left:614.0px;top:907.84px;width:1.3px;height:15.3px;background:#EEEEEE"></div>
<div class="ab" style="left:614.0px;top:922.84px;width:1.3px;height:15.3px;background:#EBEBEB"></div>
<div class="ab" style="left:615.0px;top:907.84px;width:15.3px;height:15.3px;background:#EEEEEE"></div>
<div class="ab" style="left:615.0px;top:922.84px;width:15.3px;height:15.3px;background:#EDEDED"></div>
<div class="ab" style="left:630.0px;top:907.84px;width:15.3px;height:15.3px;background:#EEEEEE"></div>
<div class="ab" style="left:630.0px;top:922.84px;width:15.3px;height:15.3px;background:#E1E1E1"></div>
<div class="ab" style="left:645.0px;top:907.84px;width:15.3px;height:15.3px;background:#F2F2F2"></div>
<div class="ab" style="left:645.0px;top:922.84px;width:15.3px;height:15.3px;background:#E1E1E1"></div>
<div class="ab" style="left:660.0px;top:907.84px;width:15.3px;height:15.3px;background:#EBEBEB"></div>
<div class="ab" style="left:660.0px;top:922.84px;width:15.3px;height:15.3px;background:#E8E8E8"></div>
<div class="ab" style="left:675.0px;top:907.84px;width:15.3px;height:15.3px;background:#F2F2F2"></div>
<div class="ab" style="left:675.0px;top:922.84px;width:15.3px;height:15.3px;background:#E1E1E1"></div>
<div class="ab" style="left:690.0px;top:907.84px;width:15.3px;height:15.3px;background:#E8E8E8"></div>
<div class="ab" style="left:690.0px;top:922.84px;width:15.3px;height:15.3px;background:#EBEBEB"></div>
<div class="ab" style="left:705.0px;top:907.84px;width:15.3px;height:15.3px;background:#EEEEEE"></div>
<div class="ab" style="left:705.0px;top:922.84px;width:15.3px;height:15.3px;background:#E1E1E1"></div>
<div class="ab" style="left:720.0px;top:907.84px;width:15.3px;height:15.3px;background:#E8E8E8"></div>
<div class="ab" style="left:720.0px;top:922.84px;width:15.3px;height:15.3px;background:#EBEBEB"></div>
<div class="ab" style="left:735.0px;top:907.84px;width:15.3px;height:15.3px;background:#F2F2F2"></div>
<div class="ab" style="left:735.0px;top:922.84px;width:15.3px;height:15.3px;background:#EBEBEB"></div>
<div class="ab" style="left:750.0px;top:907.84px;width:15.3px;height:15.3px;background:#F2F2F2"></div>
<div class="ab" style="left:750.0px;top:922.84px;width:15.3px;height:15.3px;background:#E8E8E8"></div>
<div class="ab" style="left:765.0px;top:907.84px;width:15.3px;height:15.3px;background:#EEEEEE"></div>
<div class="ab" style="left:765.0px;top:922.84px;width:15.3px;height:15.3px;background:#E4E4E4"></div>
<div class="ab" style="left:590.8px;top:948.08px;width:184.2px;height:15px;background:#FDFDFD;border-radius:3px"></div>
<div class="cb" style="left:371.5px;top:986.32px"></div>
<div class="td lt" style="left:439px;top:990.12px">263</div>
<div class="td lt" style="left:559.7px;top:990.12px">2023年</div>
<div class="tag b" style="left:861px;top:985.02px;width:51px">自动</div>
<div class="td lt" style="left:1527px;top:990.12px">xxxx222</div>
<div class="td lt" style="left:1708.5px;top:990.12px">xxxx222</div>
<div class="td lt" style="left:1935px;top:990.12px">VIP0</div>
<div class="td lt" style="left:2056px;top:990.12px">-</div>
<div class="ab" style="left:608.8px;top:984.32px;width:6.5px;height:15.3px;background:#EEEEEE"></div>
<div class="ab" style="left:608.8px;top:999.32px;width:6.5px;height:15.3px;background:#E8E8E8"></div>
<div class="ab" style="left:615.0px;top:984.32px;width:15.3px;height:15.3px;background:#EEEEEE"></div>
<div class="ab" style="left:615.0px;top:999.32px;width:15.3px;height:15.3px;background:#E4E4E4"></div>
<div class="ab" style="left:630.0px;top:984.32px;width:15.3px;height:15.3px;background:#F2F2F2"></div>
<div class="ab" style="left:630.0px;top:999.32px;width:15.3px;height:15.3px;background:#E6E6E6"></div>
<div class="ab" style="left:645.0px;top:984.32px;width:15.3px;height:15.3px;background:#EEEEEE"></div>
<div class="ab" style="left:645.0px;top:999.32px;width:15.3px;height:15.3px;background:#EBEBEB"></div>
<div class="ab" style="left:660.0px;top:984.32px;width:15.3px;height:15.3px;background:#F0F0F0"></div>
<div class="ab" style="left:660.0px;top:999.32px;width:15.3px;height:15.3px;background:#E4E4E4"></div>
<div class="ab" style="left:675.0px;top:984.32px;width:15.3px;height:15.3px;background:#EEEEEE"></div>
<div class="ab" style="left:675.0px;top:999.32px;width:15.3px;height:15.3px;background:#E1E1E1"></div>
<div class="ab" style="left:690.0px;top:984.32px;width:15.3px;height:15.3px;background:#E8E8E8"></div>
<div class="ab" style="left:690.0px;top:999.32px;width:15.3px;height:15.3px;background:#EBEBEB"></div>
<div class="ab" style="left:705.0px;top:984.32px;width:15.3px;height:15.3px;background:#E8E8E8"></div>
<div class="ab" style="left:705.0px;top:999.32px;width:15.3px;height:15.3px;background:#E6E6E6"></div>
<div class="ab" style="left:720.0px;top:984.32px;width:15.3px;height:15.3px;background:#F0F0F0"></div>
<div class="ab" style="left:720.0px;top:999.32px;width:15.3px;height:15.3px;background:#E8E8E8"></div>
<div class="ab" style="left:735.0px;top:984.32px;width:15.3px;height:15.3px;background:#E8E8E8"></div>
<div class="ab" style="left:735.0px;top:999.32px;width:15.3px;height:15.3px;background:#E6E6E6"></div>
<div class="ab" style="left:750.0px;top:984.32px;width:15.3px;height:15.3px;background:#EBEBEB"></div>
<div class="ab" style="left:750.0px;top:999.32px;width:15.3px;height:15.3px;background:#E1E1E1"></div>
<div class="ab" style="left:765.0px;top:984.32px;width:15.3px;height:15.3px;background:#E8E8E8"></div>
<div class="ab" style="left:765.0px;top:999.32px;width:15.3px;height:15.3px;background:#E1E1E1"></div>
<div class="ab" style="left:586.9px;top:1024.56px;width:195.1px;height:15px;background:#FDFDFD;border-radius:3px"></div>
<div class="cb" style="left:371.5px;top:1062.80px"></div>
<div class="td lt" style="left:439px;top:1066.60px">262</div>
<div class="td lt" style="left:559.7px;top:1066.60px">2023年</div>
<div class="tag b" style="left:861px;top:1061.50px;width:51px">自动</div>
<div class="td lt" style="left:1527px;top:1066.60px">123123123123</div>
<div class="td lt" style="left:1708.5px;top:1066.60px">ashui001</div>
<div class="td lt" style="left:1935px;top:1066.60px">VIP0</div>
<div class="td lt" style="left:2056px;top:1066.60px">-</div>
<div class="ab" style="left:604.9px;top:1060.80px;width:10.4px;height:15.3px;background:#F2F2F2"></div>
<div class="ab" style="left:604.9px;top:1075.80px;width:10.4px;height:15.3px;background:#E1E1E1"></div>
<div class="ab" style="left:615.0px;top:1060.80px;width:15.3px;height:15.3px;background:#EBEBEB"></div>
<div class="ab" style="left:615.0px;top:1075.80px;width:15.3px;height:15.3px;background:#E1E1E1"></div>
<div class="ab" style="left:630.0px;top:1060.80px;width:15.3px;height:15.3px;background:#F2F2F2"></div>
<div class="ab" style="left:630.0px;top:1075.80px;width:15.3px;height:15.3px;background:#E4E4E4"></div>
<div class="ab" style="left:645.0px;top:1060.80px;width:15.3px;height:15.3px;background:#EEEEEE"></div>
<div class="ab" style="left:645.0px;top:1075.80px;width:15.3px;height:15.3px;background:#E4E4E4"></div>
<div class="ab" style="left:660.0px;top:1060.80px;width:15.3px;height:15.3px;background:#EEEEEE"></div>
<div class="ab" style="left:660.0px;top:1075.80px;width:15.3px;height:15.3px;background:#E1E1E1"></div>
<div class="ab" style="left:675.0px;top:1060.80px;width:15.3px;height:15.3px;background:#EEEEEE"></div>
<div class="ab" style="left:675.0px;top:1075.80px;width:15.3px;height:15.3px;background:#E4E4E4"></div>
<div class="ab" style="left:690.0px;top:1060.80px;width:15.3px;height:15.3px;background:#F0F0F0"></div>
<div class="ab" style="left:690.0px;top:1075.80px;width:15.3px;height:15.3px;background:#E6E6E6"></div>
<div class="ab" style="left:705.0px;top:1060.80px;width:15.3px;height:15.3px;background:#EBEBEB"></div>
<div class="ab" style="left:705.0px;top:1075.80px;width:15.3px;height:15.3px;background:#E4E4E4"></div>
<div class="ab" style="left:720.0px;top:1060.80px;width:15.3px;height:15.3px;background:#EBEBEB"></div>
<div class="ab" style="left:720.0px;top:1075.80px;width:15.3px;height:15.3px;background:#E6E6E6"></div>
<div class="ab" style="left:735.0px;top:1060.80px;width:15.3px;height:15.3px;background:#EEEEEE"></div>
<div class="ab" style="left:735.0px;top:1075.80px;width:15.3px;height:15.3px;background:#E6E6E6"></div>
<div class="ab" style="left:750.0px;top:1060.80px;width:15.3px;height:15.3px;background:#EBEBEB"></div>
<div class="ab" style="left:750.0px;top:1075.80px;width:15.3px;height:15.3px;background:#EBEBEB"></div>
<div class="ab" style="left:765.0px;top:1060.80px;width:15.3px;height:15.3px;background:#E8E8E8"></div>
<div class="ab" style="left:765.0px;top:1075.80px;width:15.3px;height:15.3px;background:#E4E4E4"></div>
<div class="ab" style="left:582.0px;top:1101.04px;width:190.0px;height:15px;background:#FDFDFD;border-radius:3px"></div>
<div class="cb" style="left:371.5px;top:1139.28px"></div>
<div class="td lt" style="left:439px;top:1143.08px">261</div>
<div class="td lt" style="left:559.7px;top:1143.08px">2023</div>
<div class="tag b" style="left:861px;top:1137.98px;width:51px">自动</div>
<div class="td lt" style="left:1527px;top:1143.08px">xxxx111</div>
<div class="td lt" style="left:1708.5px;top:1143.08px">xxxx111</div>
<div class="td lt" style="left:1935px;top:1143.08px">VIP0</div>
<div class="td lt" style="left:2056px;top:1143.08px">-</div>
<div class="ab" style="left:600.0px;top:1137.28px;width:15.3px;height:15.3px;background:#EEEEEE"></div>
<div class="ab" style="left:600.0px;top:1152.28px;width:15.3px;height:15.3px;background:#E6E6E6"></div>
<div class="ab" style="left:615.0px;top:1137.28px;width:15.3px;height:15.3px;background:#F2F2F2"></div>
<div class="ab" style="left:615.0px;top:1152.28px;width:15.3px;height:15.3px;background:#E8E8E8"></div>
<div class="ab" style="left:630.0px;top:1137.28px;width:15.3px;height:15.3px;background:#F0F0F0"></div>
<div class="ab" style="left:630.0px;top:1152.28px;width:15.3px;height:15.3px;background:#EBEBEB"></div>
<div class="ab" style="left:645.0px;top:1137.28px;width:15.3px;height:15.3px;background:#E8E8E8"></div>
<div class="ab" style="left:645.0px;top:1152.28px;width:15.3px;height:15.3px;background:#EBEBEB"></div>
<div class="ab" style="left:660.0px;top:1137.28px;width:15.3px;height:15.3px;background:#F2F2F2"></div>
<div class="ab" style="left:660.0px;top:1152.28px;width:15.3px;height:15.3px;background:#E4E4E4"></div>
<div class="ab" style="left:675.0px;top:1137.28px;width:15.3px;height:15.3px;background:#EBEBEB"></div>
<div class="ab" style="left:675.0px;top:1152.28px;width:15.3px;height:15.3px;background:#E1E1E1"></div>
<div class="ab" style="left:690.0px;top:1137.28px;width:15.3px;height:15.3px;background:#F2F2F2"></div>
<div class="ab" style="left:690.0px;top:1152.28px;width:15.3px;height:15.3px;background:#E1E1E1"></div>
<div class="ab" style="left:705.0px;top:1137.28px;width:15.3px;height:15.3px;background:#F2F2F2"></div>
<div class="ab" style="left:705.0px;top:1152.28px;width:15.3px;height:15.3px;background:#EBEBEB"></div>
<div class="ab" style="left:720.0px;top:1137.28px;width:15.3px;height:15.3px;background:#EBEBEB"></div>
<div class="ab" style="left:720.0px;top:1152.28px;width:15.3px;height:15.3px;background:#E8E8E8"></div>
<div class="ab" style="left:735.0px;top:1137.28px;width:15.3px;height:15.3px;background:#EBEBEB"></div>
<div class="ab" style="left:735.0px;top:1152.28px;width:15.3px;height:15.3px;background:#EDEDED"></div>
<div class="ab" style="left:750.0px;top:1137.28px;width:15.3px;height:15.3px;background:#F0F0F0"></div>
<div class="ab" style="left:750.0px;top:1152.28px;width:15.3px;height:15.3px;background:#EDEDED"></div>
<div class="ab" style="left:765.0px;top:1137.28px;width:15.3px;height:15.3px;background:#F0F0F0"></div>
<div class="ab" style="left:765.0px;top:1152.28px;width:15.3px;height:15.3px;background:#E1E1E1"></div>
<div class="ab" style="left:577.7px;top:1177.52px;width:197.3px;height:15px;background:#FDFDFD;border-radius:3px"></div>
<div class="cb" style="left:371.5px;top:1215.76px"></div>
<div class="td lt" style="left:439px;top:1219.56px">260</div>
<div class="td lt" style="left:559.7px;top:1219.56px">2023</div>
<div class="tag b" style="left:861px;top:1214.46px;width:51px">自动</div>
<div class="td lt" style="left:1012.6px;top:1219.56px">1977.00</div>
<div class="td lt" style="left:1164px;top:1219.56px">ceshidaili</div>
<div class="td lt" style="left:1345.5px;top:1219.56px">ceshidaili</div>
<div class="td lt" style="left:1527px;top:1219.56px">12345666</div>
<div class="td lt" style="left:1708.5px;top:1219.56px">xxx</div>
<div class="td lt" style="left:1935px;top:1219.56px">VIP1</div>
<div class="td lt" style="left:2056px;top:1219.56px">送3</div>
<div class="ab" style="left:595.7px;top:1213.76px;width:4.6px;height:15.3px;background:#E8E8E8"></div>
<div class="ab" style="left:595.7px;top:1228.76px;width:4.6px;height:15.3px;background:#E4E4E4"></div>
<div class="ab" style="left:600.0px;top:1213.76px;width:15.3px;height:15.3px;background:#EEEEEE"></div>
<div class="ab" style="left:600.0px;top:1228.76px;width:15.3px;height:15.3px;background:#E6E6E6"></div>
<div class="ab" style="left:615.0px;top:1213.76px;width:15.3px;height:15.3px;background:#F0F0F0"></div>
<div class="ab" style="left:615.0px;top:1228.76px;width:15.3px;height:15.3px;background:#E8E8E8"></div>
<div class="ab" style="left:630.0px;top:1213.76px;width:15.3px;height:15.3px;background:#E8E8E8"></div>
<div class="ab" style="left:630.0px;top:1228.76px;width:15.3px;height:15.3px;background:#E4E4E4"></div>
<div class="ab" style="left:645.0px;top:1213.76px;width:15.3px;height:15.3px;background:#E8E8E8"></div>
<div class="ab" style="left:645.0px;top:1228.76px;width:15.3px;height:15.3px;background:#EBEBEB"></div>
<div class="ab" style="left:660.0px;top:1213.76px;width:15.3px;height:15.3px;background:#EBEBEB"></div>
<div class="ab" style="left:660.0px;top:1228.76px;width:15.3px;height:15.3px;background:#EDEDED"></div>
<div class="ab" style="left:675.0px;top:1213.76px;width:15.3px;height:15.3px;background:#F0F0F0"></div>
<div class="ab" style="left:675.0px;top:1228.76px;width:15.3px;height:15.3px;background:#E6E6E6"></div>
<div class="ab" style="left:690.0px;top:1213.76px;width:15.3px;height:15.3px;background:#F0F0F0"></div>
<div class="ab" style="left:690.0px;top:1228.76px;width:15.3px;height:15.3px;background:#E8E8E8"></div>
<div class="ab" style="left:705.0px;top:1213.76px;width:15.3px;height:15.3px;background:#F0F0F0"></div>
<div class="ab" style="left:705.0px;top:1228.76px;width:15.3px;height:15.3px;background:#E8E8E8"></div>
<div class="ab" style="left:720.0px;top:1213.76px;width:15.3px;height:15.3px;background:#E8E8E8"></div>
<div class="ab" style="left:720.0px;top:1228.76px;width:15.3px;height:15.3px;background:#E6E6E6"></div>
<div class="ab" style="left:735.0px;top:1213.76px;width:15.3px;height:15.3px;background:#E8E8E8"></div>
<div class="ab" style="left:735.0px;top:1228.76px;width:15.3px;height:15.3px;background:#EBEBEB"></div>
<div class="ab" style="left:750.0px;top:1213.76px;width:15.3px;height:15.3px;background:#EEEEEE"></div>
<div class="ab" style="left:750.0px;top:1228.76px;width:15.3px;height:15.3px;background:#E6E6E6"></div>
<div class="ab" style="left:765.0px;top:1213.76px;width:15.3px;height:15.3px;background:#EEEEEE"></div>
<div class="ab" style="left:765.0px;top:1228.76px;width:15.3px;height:15.3px;background:#E8E8E8"></div>
<div class="ab" style="left:571.0px;top:1254.00px;width:211.0px;height:15px;background:#FDFDFD;border-radius:3px"></div>
<div class="cb" style="left:371.5px;top:1292.24px"></div>
<div class="td lt" style="left:439px;top:1296.04px">259</div>
<div class="td lt" style="left:559.7px;top:1296.04px">202</div>
<div class="tag o" style="left:861px;top:1290.94px;width:51px">手动</div>
<div class="td lt" style="left:1164px;top:1296.04px">ceshidaili</div>
<div class="td lt" style="left:1345.5px;top:1296.04px">ceshidaili</div>
<div class="td lt" style="left:1527px;top:1296.04px">15988884444</div>
<div class="td lt" style="left:1708.5px;top:1296.04px">ceshi444</div>
<div class="td lt" style="left:1935px;top:1296.04px">VIP0</div>
<div class="td lt" style="left:2056px;top:1296.04px">-</div>
<div class="ab" style="left:589.0px;top:1290.24px;width:11.3px;height:15.3px;background:#EEEEEE"></div>
<div class="ab" style="left:589.0px;top:1305.24px;width:11.3px;height:15.3px;background:#E8E8E8"></div>
<div class="ab" style="left:600.0px;top:1290.24px;width:15.3px;height:15.3px;background:#E8E8E8"></div>
<div class="ab" style="left:600.0px;top:1305.24px;width:15.3px;height:15.3px;background:#E1E1E1"></div>
<div class="ab" style="left:615.0px;top:1290.24px;width:15.3px;height:15.3px;background:#F0F0F0"></div>
<div class="ab" style="left:615.0px;top:1305.24px;width:15.3px;height:15.3px;background:#EDEDED"></div>
<div class="ab" style="left:630.0px;top:1290.24px;width:15.3px;height:15.3px;background:#EBEBEB"></div>
<div class="ab" style="left:630.0px;top:1305.24px;width:15.3px;height:15.3px;background:#E4E4E4"></div>
<div class="ab" style="left:645.0px;top:1290.24px;width:15.3px;height:15.3px;background:#F0F0F0"></div>
<div class="ab" style="left:645.0px;top:1305.24px;width:15.3px;height:15.3px;background:#E1E1E1"></div>
<div class="ab" style="left:660.0px;top:1290.24px;width:15.3px;height:15.3px;background:#F0F0F0"></div>
<div class="ab" style="left:660.0px;top:1305.24px;width:15.3px;height:15.3px;background:#E8E8E8"></div>
<div class="ab" style="left:675.0px;top:1290.24px;width:15.3px;height:15.3px;background:#E8E8E8"></div>
<div class="ab" style="left:675.0px;top:1305.24px;width:15.3px;height:15.3px;background:#EBEBEB"></div>
<div class="ab" style="left:690.0px;top:1290.24px;width:15.3px;height:15.3px;background:#F2F2F2"></div>
<div class="ab" style="left:690.0px;top:1305.24px;width:15.3px;height:15.3px;background:#EDEDED"></div>
<div class="ab" style="left:705.0px;top:1290.24px;width:15.3px;height:15.3px;background:#F0F0F0"></div>
<div class="ab" style="left:705.0px;top:1305.24px;width:15.3px;height:15.3px;background:#EBEBEB"></div>
<div class="ab" style="left:720.0px;top:1290.24px;width:15.3px;height:15.3px;background:#EBEBEB"></div>
<div class="ab" style="left:720.0px;top:1305.24px;width:15.3px;height:15.3px;background:#E8E8E8"></div>
<div class="ab" style="left:735.0px;top:1290.24px;width:15.3px;height:15.3px;background:#EBEBEB"></div>
<div class="ab" style="left:735.0px;top:1305.24px;width:15.3px;height:15.3px;background:#E8E8E8"></div>
<div class="ab" style="left:750.0px;top:1290.24px;width:15.3px;height:15.3px;background:#F2F2F2"></div>
<div class="ab" style="left:750.0px;top:1305.24px;width:15.3px;height:15.3px;background:#E8E8E8"></div>
<div class="ab" style="left:765.0px;top:1290.24px;width:15.3px;height:15.3px;background:#F0F0F0"></div>
<div class="ab" style="left:765.0px;top:1305.24px;width:15.3px;height:15.3px;background:#E8E8E8"></div>
<div class="ab" style="left:566.0px;top:1330.48px;width:219.0px;height:15px;background:#FDFDFD;border-radius:3px"></div>
<div class="cb" style="left:371.5px;top:1368.72px"></div>
<div class="td lt" style="left:439px;top:1372.52px">258</div>
<div class="td lt" style="left:559.7px;top:1372.52px">202</div>
<div class="tag o" style="left:861px;top:1367.42px;width:51px">手动</div>
<div class="td lt" style="left:1164px;top:1372.52px">ceshidaili</div>
<div class="td lt" style="left:1345.5px;top:1372.52px">ceshidaili</div>
<div class="td lt" style="left:1527px;top:1372.52px">13333333333</div>
<div class="td lt" style="left:1708.5px;top:1372.52px">ceshi123</div>
<div class="td lt" style="left:1935px;top:1372.52px">VIP0</div>
<div class="td lt" style="left:2056px;top:1372.52px">-</div>
<div class="ab" style="left:584.0px;top:1366.72px;width:1.3px;height:15.3px;background:#E8E8E8"></div>
<div class="ab" style="left:584.0px;top:1381.72px;width:1.3px;height:15.3px;background:#E6E6E6"></div>
<div class="ab" style="left:585.0px;top:1366.72px;width:15.3px;height:15.3px;background:#EBEBEB"></div>
<div class="ab" style="left:585.0px;top:1381.72px;width:15.3px;height:15.3px;background:#E1E1E1"></div>
<div class="ab" style="left:600.0px;top:1366.72px;width:15.3px;height:15.3px;background:#F0F0F0"></div>
<div class="ab" style="left:600.0px;top:1381.72px;width:15.3px;height:15.3px;background:#EDEDED"></div>
<div class="ab" style="left:615.0px;top:1366.72px;width:15.3px;height:15.3px;background:#EBEBEB"></div>
<div class="ab" style="left:615.0px;top:1381.72px;width:15.3px;height:15.3px;background:#EDEDED"></div>
<div class="ab" style="left:630.0px;top:1366.72px;width:15.3px;height:15.3px;background:#EBEBEB"></div>
<div class="ab" style="left:630.0px;top:1381.72px;width:15.3px;height:15.3px;background:#E1E1E1"></div>
<div class="ab" style="left:645.0px;top:1366.72px;width:15.3px;height:15.3px;background:#EEEEEE"></div>
<div class="ab" style="left:645.0px;top:1381.72px;width:15.3px;height:15.3px;background:#E1E1E1"></div>
<div class="ab" style="left:660.0px;top:1366.72px;width:15.3px;height:15.3px;background:#EEEEEE"></div>
<div class="ab" style="left:660.0px;top:1381.72px;width:15.3px;height:15.3px;background:#E1E1E1"></div>
<div class="ab" style="left:675.0px;top:1366.72px;width:15.3px;height:15.3px;background:#F0F0F0"></div>
<div class="ab" style="left:675.0px;top:1381.72px;width:15.3px;height:15.3px;background:#E4E4E4"></div>
<div class="ab" style="left:690.0px;top:1366.72px;width:15.3px;height:15.3px;background:#F2F2F2"></div>
<div class="ab" style="left:690.0px;top:1381.72px;width:15.3px;height:15.3px;background:#E1E1E1"></div>
<div class="ab" style="left:705.0px;top:1366.72px;width:15.3px;height:15.3px;background:#F2F2F2"></div>
<div class="ab" style="left:705.0px;top:1381.72px;width:15.3px;height:15.3px;background:#EDEDED"></div>
<div class="ab" style="left:720.0px;top:1366.72px;width:15.3px;height:15.3px;background:#EBEBEB"></div>
<div class="ab" style="left:720.0px;top:1381.72px;width:15.3px;height:15.3px;background:#EDEDED"></div>
<div class="ab" style="left:735.0px;top:1366.72px;width:15.3px;height:15.3px;background:#EEEEEE"></div>
<div class="ab" style="left:735.0px;top:1381.72px;width:15.3px;height:15.3px;background:#E8E8E8"></div>
<div class="ab" style="left:750.0px;top:1366.72px;width:15.3px;height:15.3px;background:#EEEEEE"></div>
<div class="ab" style="left:750.0px;top:1381.72px;width:15.3px;height:15.3px;background:#E4E4E4"></div>
<div class="ab" style="left:765.0px;top:1366.72px;width:15.3px;height:15.3px;background:#EEEEEE"></div>
<div class="ab" style="left:765.0px;top:1381.72px;width:15.3px;height:15.3px;background:#E6E6E6"></div>
<svg class="ab" style="left:543px;top:546px" width="312" height="64" viewBox="0 0 312 64"><path d="M2 4 Q8 10 20 11 L150 13 L282 15 L298 17 L310 31 L297 45 L282 63 L282 39 L110 39 L60 33 Q10 26 3 18Z" fill="#FDFDFD"/></svg>
<div class="ab" style="left:2068.5px;top:426px;width:14px;height:1010px;background:linear-gradient(to left,rgba(0,0,0,.06),rgba(0,0,0,0))"></div>
<div class="ab" style="left:2082.5px;top:427px;width:421.0px;height:75.19999999999999px;background:#F2F2F2;border-left:1px solid #E6E6E6"></div>
<div class="td" style="left:2105px;top:455px">操作</div>
<div class="ab" style="left:2082.5px;top:503.20px;width:421.0px;height:75.48px;background:#fff;border-left:1px solid #E6E6E6"></div>
<div class="tag g" style="left:2106px;top:526.14px;width:51px">手动</div>
<div class="tag o" style="left:2172px;top:526.14px;width:51px">打针</div>
<div class="tag b" style="left:2238px;top:526.14px;width:87px">设置连单</div>
<div class="tag o" style="left:2340px;top:526.14px;width:51px">等级</div>
<div class="td" style="left:2406px;top:531.24px">...</div>
<div class="ab" style="left:2082.5px;top:579.68px;width:421.0px;height:75.48px;background:#fff;border-left:1px solid #E6E6E6"></div>
<div class="tag r" style="left:2106px;top:602.62px;width:51px">自动</div>
<div class="tag o" style="left:2172px;top:602.62px;width:51px">打针</div>
<div class="tag b" style="left:2238px;top:602.62px;width:87px">设置连单</div>
<div class="tag o" style="left:2340px;top:602.62px;width:51px">等级</div>
<div class="td" style="left:2406px;top:607.72px">...</div>
<div class="ab" style="left:2082.5px;top:656.16px;width:421.0px;height:75.48px;background:#fff;border-left:1px solid #E6E6E6"></div>
<div class="tag g" style="left:2106px;top:679.10px;width:51px">手动</div>
<div class="tag o" style="left:2172px;top:679.10px;width:51px">打针</div>
<div class="tag b" style="left:2238px;top:679.10px;width:87px">设置连单</div>
<div class="tag o" style="left:2340px;top:679.10px;width:51px">等级</div>
<div class="td" style="left:2406px;top:684.20px">...</div>
<div class="ab" style="left:2082.5px;top:732.64px;width:421.0px;height:75.48px;background:#fff;border-left:1px solid #E6E6E6"></div>
<div class="tag g" style="left:2106px;top:755.58px;width:51px">手动</div>
<div class="tag o" style="left:2172px;top:755.58px;width:51px">打针</div>
<div class="tag b" style="left:2238px;top:755.58px;width:87px">设置连单</div>
<div class="tag o" style="left:2340px;top:755.58px;width:51px">等级</div>
<div class="td" style="left:2406px;top:760.68px">...</div>
<div class="ab" style="left:2082.5px;top:809.12px;width:421.0px;height:75.48px;background:#fff;border-left:1px solid #E6E6E6"></div>
<div class="tag g" style="left:2106px;top:832.06px;width:51px">手动</div>
<div class="tag o" style="left:2172px;top:832.06px;width:51px">打针</div>
<div class="tag b" style="left:2238px;top:832.06px;width:87px">设置连单</div>
<div class="tag o" style="left:2340px;top:832.06px;width:51px">等级</div>
<div class="td" style="left:2406px;top:837.16px">...</div>
<div class="ab" style="left:2082.5px;top:885.60px;width:421.0px;height:75.48px;background:#fff;border-left:1px solid #E6E6E6"></div>
<div class="tag g" style="left:2106px;top:908.54px;width:51px">手动</div>
<div class="tag o" style="left:2172px;top:908.54px;width:51px">打针</div>
<div class="tag b" style="left:2238px;top:908.54px;width:87px">设置连单</div>
<div class="tag o" style="left:2340px;top:908.54px;width:51px">等级</div>
<div class="td" style="left:2406px;top:913.64px">...</div>
<div class="ab" style="left:2082.5px;top:962.08px;width:421.0px;height:75.48px;background:#fff;border-left:1px solid #E6E6E6"></div>
<div class="tag r" style="left:2106px;top:985.02px;width:51px">自动</div>
<div class="tag o" style="left:2172px;top:985.02px;width:51px">打针</div>
<div class="tag b" style="left:2238px;top:985.02px;width:87px">设置连单</div>
<div class="tag o" style="left:2340px;top:985.02px;width:51px">等级</div>
<div class="td" style="left:2406px;top:990.12px">...</div>
<div class="ab" style="left:2082.5px;top:1038.56px;width:421.0px;height:75.48px;background:#fff;border-left:1px solid #E6E6E6"></div>
<div class="tag r" style="left:2106px;top:1061.50px;width:51px">自动</div>
<div class="tag o" style="left:2172px;top:1061.50px;width:51px">打针</div>
<div class="tag b" style="left:2238px;top:1061.50px;width:87px">设置连单</div>
<div class="tag o" style="left:2340px;top:1061.50px;width:51px">等级</div>
<div class="td" style="left:2406px;top:1066.60px">...</div>
<div class="ab" style="left:2082.5px;top:1115.04px;width:421.0px;height:75.48px;background:#fff;border-left:1px solid #E6E6E6"></div>
<div class="tag r" style="left:2106px;top:1137.98px;width:51px">自动</div>
<div class="tag o" style="left:2172px;top:1137.98px;width:51px">打针</div>
<div class="tag b" style="left:2238px;top:1137.98px;width:87px">设置连单</div>
<div class="tag o" style="left:2340px;top:1137.98px;width:51px">等级</div>
<div class="td" style="left:2406px;top:1143.08px">...</div>
<div class="ab" style="left:2082.5px;top:1191.52px;width:421.0px;height:75.48px;background:#fff;border-left:1px solid #E6E6E6"></div>
<div class="tag r" style="left:2106px;top:1214.46px;width:51px">自动</div>
<div class="tag o" style="left:2172px;top:1214.46px;width:51px">打针</div>
<div class="tag b" style="left:2238px;top:1214.46px;width:87px">设置连单</div>
<div class="tag o" style="left:2340px;top:1214.46px;width:51px">等级</div>
<div class="td" style="left:2406px;top:1219.56px">...</div>
<div class="ab" style="left:2082.5px;top:1268.00px;width:421.0px;height:75.48px;background:#fff;border-left:1px solid #E6E6E6"></div>
<div class="tag g" style="left:2106px;top:1290.94px;width:51px">手动</div>
<div class="tag o" style="left:2172px;top:1290.94px;width:51px">打针</div>
<div class="tag b" style="left:2238px;top:1290.94px;width:87px">设置连单</div>
<div class="tag o" style="left:2340px;top:1290.94px;width:51px">等级</div>
<div class="td" style="left:2406px;top:1296.04px">...</div>
<div class="ab" style="left:2082.5px;top:1344.48px;width:421.0px;height:75.48px;background:#fff;border-left:1px solid #E6E6E6"></div>
<div class="tag g" style="left:2106px;top:1367.42px;width:51px">手动</div>
<div class="tag o" style="left:2172px;top:1367.42px;width:51px">打针</div>
<div class="tag b" style="left:2238px;top:1367.42px;width:87px">设置连单</div>
<div class="tag o" style="left:2340px;top:1367.42px;width:51px">等级</div>
<div class="td" style="left:2406px;top:1372.52px">...</div>
<div class="vl" style="left:2464.5px;top:1343.48px;height:76.48px"></div>
<svg class="ab" style="left:2473px;top:1378px" width="23" height="14" viewBox="0 0 23 14"><path d="M1 1.5 L11.5 12 L22 1.5" fill="none" stroke="#888" stroke-width="1.8"/></svg>
<div class="ab" style="left:1426.5px;top:502.5px;width:1074.5px;height:114.5px;background:#fff;border:1px solid #E6E6E6;border-top:none;box-shadow:1px 3px 12px rgba(0,0,0,.12)"></div>
<div class="ab" style="left:2497px;top:517px;width:4px;height:99px;background:#C1C1C1"></div>
<div class="tag g" style="left:1450.2px;top:527px;width:51px">手动</div>
<div class="tag o" style="left:1516px;top:527px;width:51px">打针</div>
<div class="tag b" style="left:1582px;top:527px;width:87px">设置连单</div>
<div class="tag o" style="left:1683.8px;top:527px;width:51px">等级</div>
<div class="tag r" style="left:1750px;top:527px;width:51px">余额</div>
<div class="tag r" style="left:1815.7px;top:527px;width:87px">虚拟余额</div>
<div class="tag t" style="left:1917.8px;top:527px;width:51px">编辑</div>
<div class="tag t" style="left:1983.8px;top:527px;width:105px">银行卡信息</div>
<div class="tag o" style="left:2103.5px;top:527px;width:87px">地址信息</div>
<div class="tag o" style="left:2205.6px;top:527px;width:87px">查看团队</div>
<div class="tag b" style="left:2307.7px;top:527px;width:51px">账变</div>
<div class="tag r" style="left:2373.7px;top:527px;width:51px">禁用</div>
<div class="tag r" style="left:1465px;top:563px;width:51px">删除</div>
<div class="tag g" style="left:1531px;top:563px;width:87px">设为假人</div>
<div class="ab" style="left:2467.8px;top:483px;width:39px;height:39px;border-radius:50%;background:#666"></div>
<svg class="ab" style="left:2479px;top:494px" width="17" height="17" viewBox="0 0 17 17"><path d="M1 1 L16 16 M16 1 L1 16" stroke="#fff" stroke-width="1.6"/></svg>
<div class="ab" style="left:2535px;top:146px;width:19px;height:1283px;background:#EEEEEE"></div>
</body></html>
